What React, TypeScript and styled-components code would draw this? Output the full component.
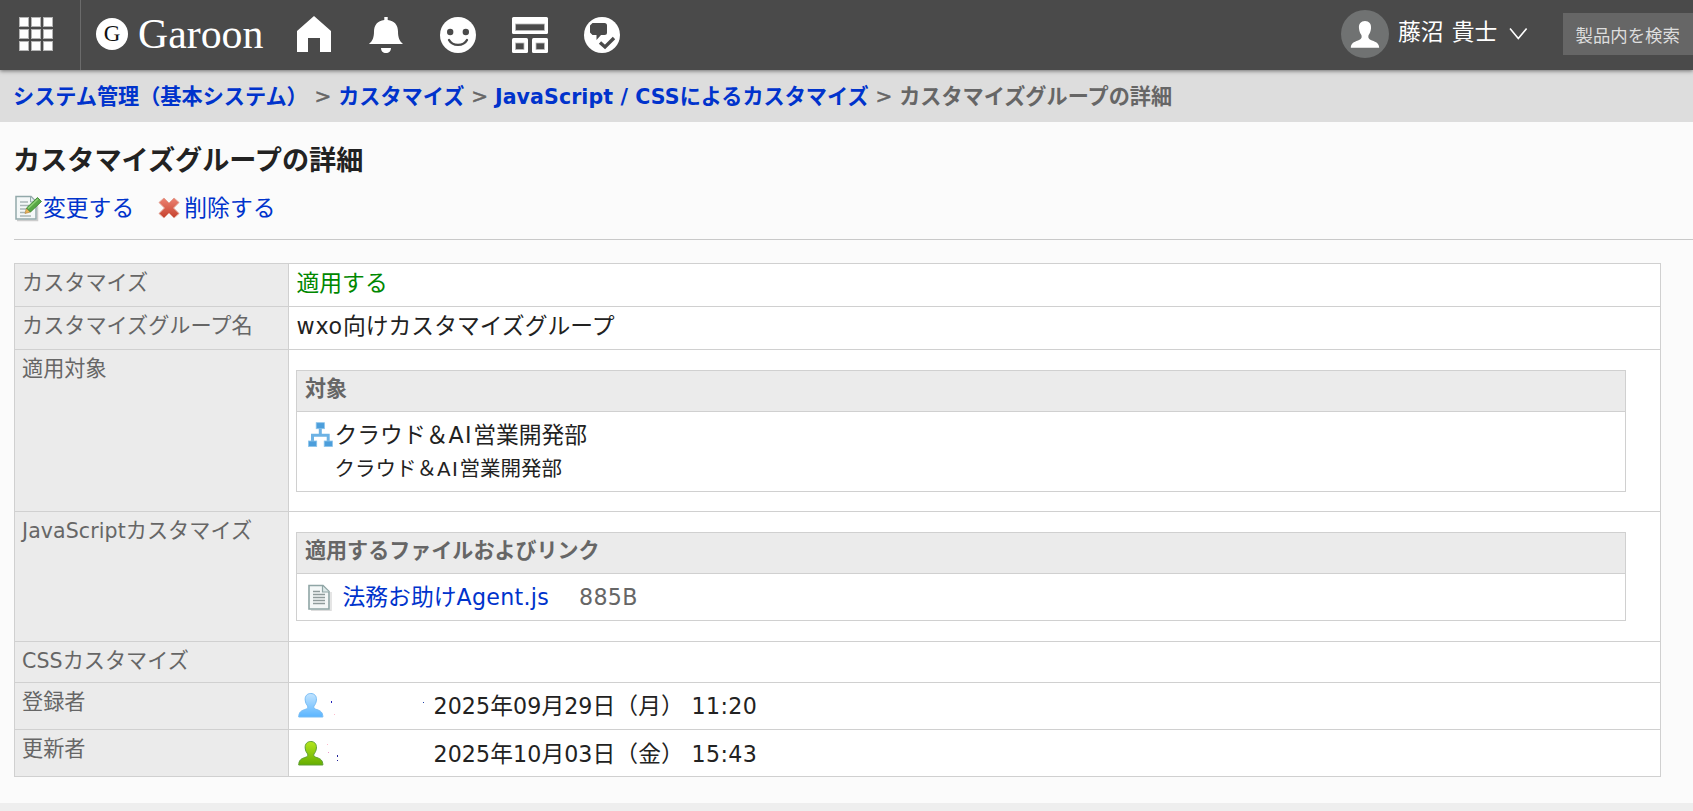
import React from "react";
import styled, { createGlobalStyle } from "styled-components";

const GlobalStyle = createGlobalStyle`
  * { box-sizing: border-box; }
  body {
    margin: 0;
    background: #fbfbfb;
    color: #222;
    font-family: "Noto Sans CJK JP", sans-serif;
    font-size: 22.8px;
    overflow: hidden;
  }
`;

const Page = styled.div`
  height: 811px;
  display: flex;
  flex-direction: column;
  overflow: hidden;
  white-space: nowrap;
`;

const Header = styled.header`
  position: relative;
  flex: none;
  height: 70px;
  display: flex;
  align-items: stretch;
  background: #4a4a4a;
  box-shadow: 0 1px 4px rgba(0, 0, 0, 0.5);
`;

const AppsButton = styled.div`
  width: 81px;
  padding: 17px 0 0 19px;
  border-right: 1px solid #6b6b6b;
`;

const Logo = styled.div`
  display: flex;
  align-items: center;
  width: 216px;
  padding: 0 0 2px 15px;
  gap: 10px;
  color: #fff;
  font-family: "Liberation Serif", serif;
  font-size: 41.8px;
  line-height: 60px;
`;

const LogoMark = styled.span`
  width: 32px;
  height: 32px;
  border-radius: 50%;
  background: #fff;
  color: #111;
  font-size: 23px;
  line-height: 32px;
  text-align: center;
`;

const Nav = styled.nav`
  display: flex;
  gap: 36px;
  margin-left: -1px;
  padding-top: 17px;
`;

const Icon = styled.svg`
  display: block;
  flex: none;
  overflow: visible;
`;

const Account = styled.div`
  display: flex;
  margin-left: auto;
  width: 222px;
  padding-top: 10px;
  color: #fff;
`;

const UserName = styled.span`
  margin-left: 9px;
  width: 112px;
  word-spacing: 3px;
  line-height: 41px;
`;

const Search = styled.div`
  width: 130px;
  height: 42px;
  margin-top: 13px;
  padding-left: 12.5px;
  background: #666;
  color: #ddd;
  font-size: 17.4px;
  line-height: 43px;
`;

const Breadcrumb = styled.div`
  flex: none;
  display: flex;
  height: 52px;
  padding-left: 13px;
  background: #ddd;
  color: #666;
  font-size: 21.15px;
  font-weight: bold;
  line-height: 50px;
`;

const Separator = styled.span`
  width: 30.5px;
  text-align: center;
  font-family: "DejaVu Sans", sans-serif;
  font-weight: normal;
  font-size: 20px;
  line-height: 52px;
  -webkit-text-stroke: 0.5px #666;
`;

const Link = styled.a`
  color: #03c;
`;

const Latin = styled.span<{ $spacing?: number }>`
  font-family: "DejaVu Sans", sans-serif;
  font-size: 0.971em;
  letter-spacing: ${(p) => p.$spacing ?? 0.1}px;
`;

const Title = styled.h1`
  margin: 18px 0 0 13px;
  height: 38px;
  font-size: 27.15px;
  line-height: 38px;
`;

const Actions = styled.div`
  display: flex;
  margin: 13px 0 0 14px;
  height: 49px;
  border-bottom: 1px solid #c9c9c9;
  line-height: 32px;
`;

const Action = styled(Link)`
  display: flex;
  align-items: flex-start;
  margin-right: 24px;

  svg { margin: 3px -1px 0 0; }
`;

const Details = styled.dl`
  display: grid;
  grid-template-columns: 274px 1372px;
  grid-template-rows: 43px 43px 162px 130px 41px 47px 47px;
  width: 1647px;
  flex: none;
  margin: 23px 0 0 14px;
  border: solid #d0d0d0;
  border-width: 1px 0 0 1px;
`;

const Label = styled.dt`
  padding: 2px 0 0 7px;
  border: solid #d0d0d0;
  border-width: 0 1px 1px 0;
  background: #ebebeb;
  color: #666;
  font-size: 21.15px;
  line-height: 30px;
`;

const Value = styled.dd<{ $tone?: string; $top?: number }>`
  margin: 0;
  padding: ${(p) => p.$top ?? 2}px 0 0 7.5px;
  border: solid #d0d0d0;
  border-width: 0 1px 1px 0;
  background: #fff;
  color: ${(p) => p.$tone ?? "#222"};
  line-height: 31px;
`;

const Panel = styled.section<{ $height: number }>`
  width: 1330px;
  height: ${(p) => p.$height}px;
  margin-left: -0.5px;
  border: 1px solid #d0d0d0;
`;

const PanelHead = styled.h2`
  height: 41px;
  margin: 0;
  padding-left: 8px;
  border-bottom: 1px solid #d0d0d0;
  background: #ebebeb;
  color: #666;
  font-size: 21.05px;
  line-height: 33px;
`;

const PanelRow = styled.div`
  display: flex;
  padding: 10px 0 0 10.5px;
  line-height: 32px;
`;

const Department = styled.div`
  margin: -4px 0 0 2px;
`;

const DepartmentPath = styled.div`
  font-size: 20.5px;
`;

const FileName = styled(Link)`
  margin: -4px 0 0 11px;
  width: 236.5px;
`;

const FileSize = styled.span`
  margin-top: -4px;
  color: #666;
`;

const Stamp = styled.div`
  display: flex;
  align-items: flex-start;
`;

const StampDate = styled.span`
  width: 258px;
  margin: -3px 0 0 1px;
`;

const StampTime = styled.span`
  margin-top: -3px;
`;

const Footer = styled.div`
  flex: 1;
  margin-top: 26px;
  background: #eee;
`;

const AppsIcon = () => (
  <Icon width="34" height="34" viewBox="0 0 34 34">
    {[0, 12, 24].map((y) =>
      [0, 12, 24].map((x) => (
        <rect key={`${x}-${y}`} x={x + 0.5} y={y + 0.5} width="9" height="9" fill="#fff" stroke="#b4b4b4" />
      )),
    )}
  </Icon>
);

const HomeIcon = () => (
  <Icon width="36" height="36" viewBox="0 0 36 36" fill="#fff">
    <path d="M18-1 35 14V35H24V21H12V35H1V14Z" />
  </Icon>
);

const BellIcon = () => (
  <Icon width="36" height="36" viewBox="0 0 36 36" fill="#fff">
    <path d="M16.300 0h3.400v3c6.600.8 10.300 5 10.300 11.500 0 6 1.500 9.500 5 12.500H1c3.500-3 5-6.500 5-12.500C6 8 9.700 3.800 16.300 3ZM13 31h10c0 3-2 5-5 5s-5-2-5-5Z" />
  </Icon>
);

const SmileIcon = () => (
  <Icon width="36" height="36" viewBox="0 0 36 36">
    <circle cx="18" cy="18" r="18" fill="#fff" />
    <circle cx="10.200" cy="15" r="3.200" fill="#4a4a4a" />
    <circle cx="25.800" cy="15" r="3.200" fill="#4a4a4a" />
    <path d="M9 23c3.500 6.500 14.500 6.500 18 0" fill="none" stroke="#4a4a4a" strokeWidth="2.300" strokeLinecap="round" />
  </Icon>
);

const PortalIcon = () => (
  <Icon width="36" height="36" viewBox="0 0 36 36" fill="#fff">
    <rect width="36" height="17" rx="1.500" />
    <rect y="21" width="16" height="15" rx="1.500" />
    <rect x="20" y="21" width="16" height="15" rx="1.500" />
    <g fill="#4a4a4a" stroke="#bbb" strokeWidth=".8">
      <rect x="3.500" y="7" width="29" height="6.500" />
      <rect x="3.500" y="26" width="8.500" height="6.500" />
      <rect x="24" y="26" width="8.500" height="6.500" />
    </g>
  </Icon>
);

const ChatIcon = () => (
  <Icon width="36" height="36" viewBox="0 0 36 36">
    <circle cx="18" cy="18" r="18" fill="#fff" />
    <path d="M8.500 6h12A2.500 2.500 0 0 1 23 8.500v7a2.500 2.500 0 0 1-2.500 2.500H17l-4.500 5V18h-4L6 15.500v-7Z" fill="#4a4a4a" />
    <path d="m16 25.500 5 4.500 9-9" fill="none" stroke="#4a4a4a" strokeWidth="3.400" />
  </Icon>
);

const AvatarIcon = () => (
  <Icon width="48" height="48" viewBox="0 0 48 48">
    <circle cx="24" cy="24" r="24" fill="#707272" />
    <path d="M24 11c4 0 6.500 2.800 6 7.500-.3 3-1.200 5-2.400 6.500-.8 3 .2 4.200 3.400 5.400 4.300 1.500 7 3 7.200 7.300H9.800c.2-4.300 2.900-5.800 7.200-7.300 3.200-1.200 4.200-2.400 3.400-5.400-1.200-1.500-2.100-3.500-2.400-6.500-.5-4.700 2-7.500 6-7.500Z" fill="#fff" />
  </Icon>
);

const ChevronIcon = () => (
  <Icon width="18" height="48" viewBox="0 0 18 48">
    <path d="M0 18.500l8.300 10 8.300-10" fill="none" stroke="#fff" strokeWidth="1.600" />
  </Icon>
);

const EditIcon = () => (
  <Icon width="30" height="28" viewBox="0 0 30 28">
    <path d="M3 26.500h20.500V8" fill="none" stroke="#ccc" strokeWidth="1.500" />
    <path d="M2 2.500h15l5 5V25H2Z" fill="#f4f8f8" stroke="#92a9aa" strokeWidth="1.500" />
    <path d="M16.500 3v5H22" fill="#e2ebeb" stroke="#92a9aa" />
    <path d="M6 8h8M6 11.500h9M6 15h6M6 18.500h5M6 22h11" stroke="#a9b6b6" strokeWidth="1.300" />
    <path d="m11 19.500 1.500-5.500 4 4Z" fill="#e9b55e" stroke="#a77830" strokeWidth=".6" />
    <path d="M12.500 14 23.500 3.500l4 4L16.500 18Z" fill="#58a846" stroke="#347d28" strokeWidth=".8" />
    <path d="m14 14.500 10-9.500" stroke="#8ed076" strokeWidth="1.500" />
  </Icon>
);

const DeleteIcon = () => (
  <Icon width="22" height="28" viewBox="0 0 22 28">
    <defs>
      <linearGradient id="cross" x1="0" y1="0" x2="0" y2="1">
        <stop offset="0" stopColor="#ed8373" />
        <stop offset="1" stopColor="#c5402c" />
      </linearGradient>
    </defs>
    <path d="m6 4 5 5 5-5 5 4.500-5.500 5.500 5.500 5.500-5 4.500-5-5-5 5-5-4.500L6.500 14 1 8.500Z" fill="url(#cross)" stroke="#e3a294" strokeWidth="1" strokeLinejoin="round" />
  </Icon>
);

const OrgIcon = () => (
  <Icon width="25" height="26" viewBox="0 0 25 26">
    <path d="M12.300 6v7M4.500 19v-5.800h15.700V19" fill="none" stroke="#6db2e4" strokeWidth="3" />
    <g fill="#4c9edb" stroke="#8cc4ec" strokeWidth=".8">
      <rect x="8.200" y=".7" width="8.200" height="6" />
      <rect x=".5" y="19" width="8.200" height="5.500" />
      <rect x="16.200" y="19" width="8.200" height="5.500" />
    </g>
  </Icon>
);

const FileIcon = () => (
  <Icon width="24" height="27" viewBox="0 0 24 27">
    <path d="M3 26.200h20V8" fill="none" stroke="#ddd" strokeWidth="1.500" />
    <path d="M1 1.500h14l6 6V25H1Z" fill="#f3f7f7" stroke="#8fa5a5" strokeWidth="1.600" />
    <path d="M14.500 2v6H21" fill="#dce8e8" stroke="#8fa5a5" strokeWidth="1.200" />
    <path d="M5 7.500h7M5 10.500h12M5 13.500h12M5 16.500h12M5 19.500h12" stroke="#8f9b9b" strokeWidth="1.400" />
  </Icon>
);

interface PersonProps {
  id: string;
  light: string;
  dark: string;
  edge: string;
  specks: [number, number, string, number][];
}

const PersonIcon = ({ id, light, dark, edge, specks }: PersonProps) => (
  <Icon width="136" height="30" viewBox="0 0 136 30">
    <defs>
      <linearGradient id={id} x1="0" y1="0" x2="0" y2="1">
        <stop offset="0" stopColor={light} />
        <stop offset="1" stopColor={dark} />
      </linearGradient>
    </defs>
    <path d="M13.800 1.500c3.700 0 6 2.600 5.600 6.500-.3 3-1.200 4.500-2.500 6-.5 2 .3 2.800 3 3.600 3.800 1.200 5.800 2.700 6 7.400H1.700c.2-4.700 2.200-6.200 6-7.400 2.700-.8 3.500-1.600 3-3.600-1.300-1.500-2.200-3-2.500-6-.4-3.900 1.900-6.500 5.600-6.500Z" fill={`url(#${id})`} stroke={edge} strokeWidth="1" />
    {specks.map(([x, y, color, h]) => (
      <rect key={`${x}-${y}`} x={x} y={y} width="1" height={h} fill={color} />
    ))}
  </Icon>
);

export default function App() {
  return (
    <Page>
      <GlobalStyle />
      <Header>
        <AppsButton><AppsIcon /></AppsButton>
        <Logo><LogoMark>G</LogoMark>Garoon</Logo>
        <Nav>
          <HomeIcon />
          <BellIcon />
          <SmileIcon />
          <PortalIcon />
          <ChatIcon />
        </Nav>
        <Account>
          <AvatarIcon />
          <UserName>藤沼 貴士</UserName>
          <ChevronIcon />
        </Account>
        <Search>製品内を検索</Search>
      </Header>
      <Breadcrumb>
        <Link>システム管理（基本システム）</Link>
        <Separator>&gt;</Separator>
        <Link>カスタマイズ</Link>
        <Separator>&gt;</Separator>
        <Link><Latin>JavaScript / CSS</Latin>によるカスタマイズ</Link>
        <Separator>&gt;</Separator>
        <span>カスタマイズグループの詳細</span>
      </Breadcrumb>
      <Title>カスタマイズグループの詳細</Title>
      <Actions>
        <Action><EditIcon />変更する</Action>
        <Action><DeleteIcon />&nbsp;削除する</Action>
      </Actions>
      <Details>
        <Label>カスタマイズ</Label>
        <Value $tone="#080">適用する</Value>
        <Label>カスタマイズグループ名</Label>
        <Value><Latin $spacing={0.8}>wxo</Latin>向けカスタマイズグループ</Value>
        <Label>適用対象</Label>
        <Value $top={20}>
          <Panel $height={122}>
            <PanelHead>対象</PanelHead>
            <PanelRow>
              <OrgIcon />
              <Department>
                <div>クラウド＆<Latin $spacing={1.500}>AI</Latin>営業開発部</div>
                <DepartmentPath>クラウド＆<Latin $spacing={1.500}>AI</Latin>営業開発部</DepartmentPath>
              </Department>
            </PanelRow>
          </Panel>
        </Value>
        <Label><Latin>JavaScript</Latin>カスタマイズ</Label>
        <Value $top={20}>
          <Panel $height={89}>
            <PanelHead>適用するファイルおよびリンク</PanelHead>
            <PanelRow>
              <FileIcon />
              <FileName>法務お助け<Latin $spacing={0.300}>Agent.js</Latin></FileName>
              <FileSize><Latin $spacing={0.300}>885B</Latin></FileSize>
            </PanelRow>
          </Panel>
        </Value>
        <Label><Latin>CSS</Latin>カスタマイズ</Label>
        <Value />
        <Label>登録者</Label>
        <Value $top={9}>
          <Stamp>
            <PersonIcon
              id="creator" light="#c2e4ff" dark="#5ab5ff" edge="#79bdf5"
              specks={[[34, 9, "#22b", 2], [37, 22, "#fbc", 1], [126, 10, "#24a", 1]]}
            />
            <StampDate><Latin>2025</Latin>年<Latin>09</Latin>月<Latin>29</Latin>日（月）</StampDate>
            <StampTime><Latin $spacing={0.400}>11:20</Latin></StampTime>
          </Stamp>
        </Value>
        <Label>更新者</Label>
        <Value $top={10}>
          <Stamp>
            <PersonIcon
              id="updater" light="#b4e61e" dark="#65ad00" edge="#5f9f35"
              specks={[[30, 4, "#fbc", 1], [31, 12, "#e9c", 1], [40, 15, "#229", 2], [40, 20, "#229", 1]]}
            />
            <StampDate><Latin>2025</Latin>年<Latin>10</Latin>月<Latin>03</Latin>日（金）</StampDate>
            <StampTime><Latin $spacing={0.400}>15:43</Latin></StampTime>
          </Stamp>
        </Value>
      </Details>
      <Footer />
    </Page>
  );
}
